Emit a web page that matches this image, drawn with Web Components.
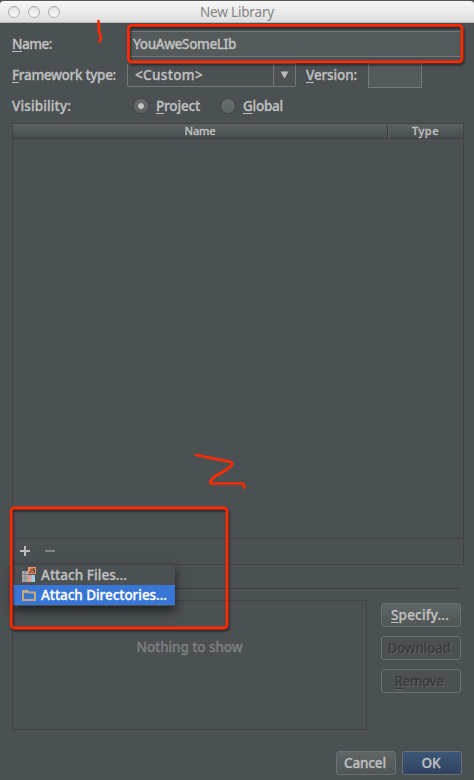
<!DOCTYPE html>
<html lang="en"><head><meta charset="utf-8"><title>New Library</title>
<style>html,body{margin:0;background:#4b5052}body{width:474px;height:780px;overflow:hidden}</style></head><body>
<library-dialog></library-dialog>
<script>
const define=(name,html,init)=>customElements.define(name,class extends HTMLElement{
 constructor(){super();this.attachShadow({mode:'open'}).innerHTML=html;}
 connectedCallback(){if(init)init(this,this.shadowRoot);}
});
// Text label; "w" spreads the letters over a given width.
define('ui-text',`<style>:host{display:inline-block;white-space:nowrap;line-height:20px}span{display:inline-block}</style><span><slot></slot></span>`,(el,r)=>{
 const w=+el.getAttribute('w');if(!w)return;
 const s=r.querySelector('span');const n=el.textContent.length;
 const nat=s.getBoundingClientRect().width;
 s.style.letterSpacing=((w-nat)/n)+'px';
});
define('title-bar',`<style>:host{display:grid;box-sizing:border-box;height:23px;grid-template-columns:1fr;align-items:center;background:linear-gradient(#f7f7f7,#dedede);border-top:1px solid #55565a;border-bottom:1px solid #b5b7b8;border-radius:4px 4px 0 0;color:#858585;font-weight:400;-webkit-text-stroke:0}
.d{grid-area:1/1;display:flex;gap:8px;padding-left:8px}.d i{width:10px;height:10px;border:1px solid #adadad;border-radius:50%;background:linear-gradient(#e3e3e3,#f8f8f8)}.t{grid-area:1/1;padding-left:200px}</style><div class="d"><i></i><i></i><i></i></div><div class="t"><slot></slot></div>`);
define('form-row',`<style>:host{display:flex;align-items:center;box-sizing:border-box}</style><slot></slot>`);
define('text-field',`<style>:host{display:flex;align-items:center;box-sizing:border-box;border:1px solid #74797a;background:#545959;padding-left:5px}</style><slot></slot>`);
define('combo-box',`<style>:host{display:flex;box-sizing:border-box;width:169px;height:24px;border:1px solid #747879;border-radius:2px;align-items:center}.v{flex:1;padding-left:7px;display:flex}.a{width:21px;height:22px;border-left:1px solid #747879;display:grid;place-items:center}</style><div class="v"><slot></slot></div><div class="a"><svg width="9" height="8"><path d="M.5 .5H8.5L4.5 7.5Z" fill="#bbb"/></svg></div>`);
define('radio-button',`<style>:host{display:flex;align-items:center;gap:7px}i{width:14px;height:14px;border-radius:50%;background:linear-gradient(#676c6d,#5c6163);box-shadow:0 0 1px 1px #44494a;display:grid;place-items:center;margin-right:1px}:host([checked]) i:after{content:"";width:6px;height:6px;border-radius:50%;background:#c4c4c4;box-shadow:0 0 1px #333}</style><i></i><slot></slot>`);
define('library-table',`<style>:host{display:flex;flex-direction:column;box-sizing:border-box;width:452px;height:442px;border:1px solid #414343}.h{display:flex;height:14px;background:linear-gradient(#5c6162,#474c4e);border-bottom:1px solid #3c4041;font-size:11px;align-items:center}.n{width:374px;display:flex;justify-content:center;border-right:1px solid #383b3c;height:13px;align-items:center;box-shadow:1px 0 #606465}.t{flex:1;display:flex;justify-content:center}.b{flex:1;border-bottom:1px solid #414343}.f{height:25px;display:flex;align-items:center;gap:15px;padding-left:7px}svg{margin-top:-1px}</style><div class="h"><div class="n"><slot name="name"></slot></div><div class="t"><slot name="type"></slot></div></div><div class="b"></div><div class="f"><svg width="10" height="10"><path d="M5 0V10M0 5H10" stroke="#bcbcbc" stroke-width="2"/></svg><svg width="10" height="10"><path d="M0 5H10" stroke="#818485" stroke-width="2"/></svg></div>`);
define('empty-list',`<style>:host{display:flex;justify-content:center;box-sizing:border-box;width:355px;height:130px;border:1px solid #414343;padding-top:36px;color:#7d8080}</style><slot></slot>`);
define('push-button',`<style>:host{display:flex;align-items:center;justify-content:center;box-sizing:border-box;width:80px;height:24px;padding-right:2px;border:1px solid #6b7071;border-radius:3px;background:linear-gradient(#606566,#505556)}:host([disabled]){background:none;padding-right:4px;color:#35393a;text-shadow:1px 1px #606465;-webkit-text-stroke:0}:host([primary]){background:linear-gradient(#3c5778,#304360)}:host([small]){width:60px}</style><slot></slot>`);
define('context-menu',`<style>:host{position:absolute;z-index:2;left:13px;top:564px;width:162px;height:42px;box-sizing:border-box;border-top:1px solid #404445;background:#4b5052;box-shadow:0 5px 10px #0009;display:block}</style><slot></slot>`);
define('menu-item',`<style>:host{display:flex;align-items:center;height:20px;gap:5px;padding-left:8px}:host([selected]){background:#3876d6;color:#fff}svg{flex:none}</style><svg width="15" height="16"></svg><slot></slot>`,(el,r)=>{
 r.querySelector('svg').innerHTML=el.hasAttribute('selected')?'<path d="M2 5.5V13H14V5.5H8L6.5 4H2Z" fill="none" stroke="#c9a677" stroke-width="2"/><path d="M1 3H7V6H1Z" fill="#c9a677"/>':'<path d="M1 4H7V8H14V15H1Z" fill="#a5a7a8"/><path d="M7 8H10.5V15H7Z" fill="#e19a93"/><path d="M10.5 8H14V15H10.5Z" fill="#9fd0e4"/><path d="M1 7.5H6M1 11H7M4 4V15" stroke="#777b7c" stroke-width=".6"/><path d="M7 0H15V7H7Z" fill="#ed956b"/><path d="M10 1.5V5.3H8M13.8 1.8H11.8V3.3H13.5V5.3H11.3" fill="none" stroke="#4b3028"/>';
});
define('red-marks',`<style>:host{position:absolute;inset:0;z-index:3;pointer-events:none}svg{display:block;filter:drop-shadow(1px 2px 1px #0008)}</style><svg width="474" height="780" fill="none" stroke="#ff2a00" stroke-width="2.8" stroke-linecap="round" stroke-linejoin="round"><rect x="128.5" y="25.3" width="333.5" height="36.5" rx="3"/><rect x="11.2" y="508" width="215.8" height="120" rx="3"/></svg><svg style="position:absolute;inset:0;filter:none" width="474" height="780" fill="none" stroke="#ff2a00" stroke-width="2.7" stroke-linecap="round" stroke-linejoin="round"><path d="M98.5 21L99 31L101 38L99.5 41.5M196 455L229 461.5Q234 463 231 466L226 470L214 477Q209 482 211 483.5H243L244.5 487.5"/></svg>`);
define('library-dialog',`<style>:host{display:block;position:relative;width:474px;height:780px;box-sizing:border-box;background:#4b5052;color:#c0c0c0;font:500 13.5px "Noto Sans","Open Sans",sans-serif;-webkit-text-stroke:.3px;overflow:hidden}
u{text-decoration-thickness:1px;text-underline-offset:2px}.form{height:100px;padding-left:12px;box-sizing:border-box}
form-row ui-text.lab{width:115px;flex:none}.low{display:flex;gap:14px;padding-left:12px}.btns{display:flex;flex-direction:column;gap:9px;padding-top:3px}.foot{display:flex;gap:6px;padding:21px 0 0 336px}library-table{margin-left:12px}.sep{height:23px;border-bottom:1px solid #393d3e;margin:0 14px 11px 12px}</style>
<title-bar><ui-text w="74">New Library</ui-text></title-bar>
<div class="form">
<form-row style="height:42px"><ui-text class="lab" w="40"><u>N</u>ame:</ui-text><text-field style="width:336px;height:26px"><ui-text w="103">YouAweSomeLIb</ui-text></text-field></form-row>
<form-row style="height:20px"><ui-text class="lab" w="104"><u>F</u>ramework type:</ui-text><combo-box><ui-text w="68">&lt;Custom&gt;</ui-text></combo-box><ui-text style="width:62px;margin-left:10px" w="51"><u>V</u>ersion:</ui-text><text-field style="width:54px;height:26px"></text-field></form-row>
<form-row style="height:41px"><ui-text class="lab" w="59" style="width:122px">Visibility:</ui-text><radio-button checked style="width:87px"><ui-text w="44"><u>P</u>roject</ui-text></radio-button><radio-button><ui-text w="40"><u>G</u>lobal</ui-text></radio-button></form-row>
</div>
<library-table><ui-text slot="name" w="31">Name</ui-text><ui-text slot="type" w="27">Type</ui-text></library-table>
<div class="sep"></div>
<div class="low"><empty-list><ui-text w="106">Nothing to show</ui-text></empty-list><div class="btns"><push-button><ui-text w="58"><u>S</u>pecify...</ui-text></push-button><push-button disabled><ui-text w="63">Download</ui-text></push-button><push-button disabled><ui-text w="49"><u>R</u>emove</ui-text></push-button></div></div>
<div class="foot"><push-button small><ui-text w="42">Cancel</ui-text></push-button><push-button small primary><ui-text w="19">OK</ui-text></push-button></div>
<context-menu><menu-item><ui-text w="86">Attach Files...</ui-text></menu-item><menu-item selected><ui-text w="126">Attach Directories...</ui-text></menu-item></context-menu>
<red-marks></red-marks>`);
</script></body></html>
